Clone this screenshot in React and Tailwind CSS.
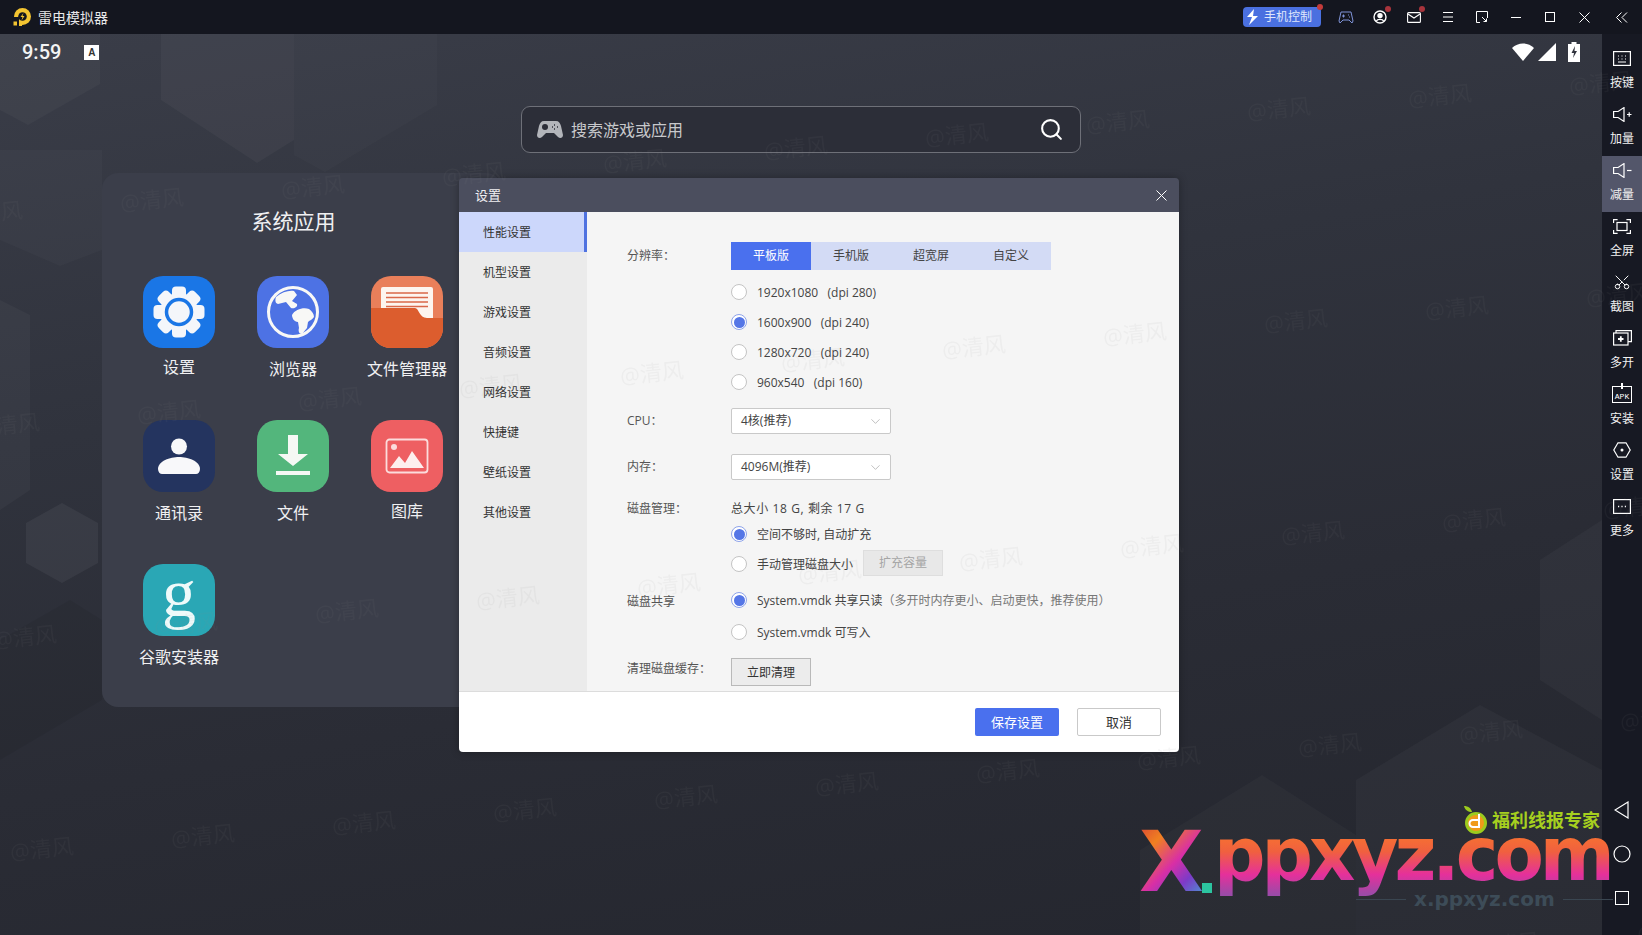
import React from "react";
import { ChevronDown, Scissors, Search } from "lucide-react";

const baseFont = "font-['Open_Sans','Noto_Sans_CJK_SC',sans-serif]";

// faint diagonal grid of the "@清风" mark, it lies over the whole shot
const marks = [];
for (let row = 0; row < 5; row++) {
  for (let col = -1; col < 11; col++) {
    marks.push({
      x: col * 161 + row * 17 + 152,
      y: row * 212 - col * 13 + 200,
    });
  }
}

const Watermark = () => (
  <div className="absolute inset-0 overflow-hidden pointer-events-none">
    {marks.map((m, i) => (
      <span
        key={i}
        className="absolute text-[22px] leading-none text-[#8a8a8a] opacity-[0.07] -rotate-6 whitespace-nowrap"
        style={{ left: m.x - 32, top: m.y - 12 }}
      >
        @清风
      </span>
    ))}
  </div>
);

const Wallpaper = () => (
  <svg className="absolute inset-0 w-full h-full" viewBox="0 34 1602 901">
    <g stroke="none">
      <polygon points="0,34 100,34 100,84 28,125 0,110" fill="#fff" fillOpacity="0.03" />
      <polygon points="161,34 294,34 294,140 257,163 161,100" fill="#fff" fillOpacity="0.035" />
      <polygon points="294,34 437,34 437,105 325,172 294,155" fill="#fff" fillOpacity="0.02" />
      <polygon points="0,150 102,150 102,250 60,266 0,240" fill="#fff" fillOpacity="0.025" />
      <polygon points="0,300 30,315 30,490 0,510" fill="#fff" fillOpacity="0.03" />
      <polygon points="62,503 98,523 98,563 62,583 26,563 26,523" fill="#fff" fillOpacity="0.05" />
      <polygon points="1140,850 1262,775 1356,835 1356,935 1140,935" fill="#fff" fillOpacity="0.025" />
      <polygon points="1356,935 1356,780 1480,705 1602,770 1602,935" fill="#fff" fillOpacity="0.03" />
      <polygon points="1602,520 1540,560 1540,680 1602,720" fill="#fff" fillOpacity="0.03" />
      <polygon points="0,640 70,600 102,620 102,700 0,760" fill="#000" fillOpacity="0.06" />
    </g>
  </svg>
);

const Logo = () => (
  <svg width="18" height="18" viewBox="0 0 18 18">
    <circle cx="9.500" cy="8.500" r="8.500" fill="#f4c531" />
    <circle cx="9.500" cy="8.500" r="4.300" fill="#14161f" />
    <rect x="0" y="9" width="6" height="9" fill="#14161f" />
    <rect x="6" y="13" width="3" height="5" fill="#f4c531" />
    <rect x="0.500" y="13.500" width="3.500" height="4" fill="#f4c531" />
    <path d="M10.500 5 7.500 9h2l-1 3.500L11.500 8h-2z" fill="#f4c531" />
  </svg>
);

const topIcon = "w-[34px] h-[34px] flex items-center justify-center relative";
const Dot = () => (
  <span className="absolute top-[6px] right-[6px] w-[6px] h-[6px] rounded-full bg-[#a8343c]" />
);

const TitleBar = () => (
  <div className="h-[34px] bg-[#14161f] flex items-center shrink-0">
    <div className="ml-[13px]">
      <Logo />
    </div>
    <div className="ml-[7px] text-[14px] text-[#e8e8ea]">雷电模拟器</div>
    <div className="ml-auto flex items-center pr-[1px]">
      <div className="relative w-[78px] h-[20px] mr-[8px] rounded-[4px] bg-[#4a70e0] flex items-center">
        <svg width="14" height="16" viewBox="0 0 14 16" className="ml-[3px]">
          <path d="M8 0 1 8h5l-3 8 9-9H7z" fill="#fff" />
        </svg>
        <span className="ml-[4px] text-[12px] text-[#dfe6fb] whitespace-nowrap">手机控制</span>
        <span className="absolute -top-[3px] -right-[2px] w-[6px] h-[6px] rounded-full bg-[#c43b3b]" />
      </div>
      <div className={topIcon}>
        <svg width="16" height="13" viewBox="0 0 16 13" fill="none" stroke="#7f93d8" strokeWidth="1">
          <path d="M3 1h10l2 9-1 2-3-3H5l-3 3-1-2z" />
          <path d="M4 5h3M5.500 3.500v3M10 4h1M11 6h1" />
        </svg>
      </div>
      <div className={topIcon}>
        <svg width="14" height="14" viewBox="0 0 14 14" fill="none" stroke="#fff" strokeWidth="1.400">
          <circle cx="7" cy="7" r="6" />
          <circle cx="7" cy="5.600" r="2" fill="#fff" />
          <path d="M3.400 11c1-2.200 6.200-2.200 7.200 0" />
        </svg>
        <Dot />
      </div>
      <div className={topIcon}>
        <svg width="14" height="11" viewBox="0 0 14 11" fill="none" stroke="#fff" strokeWidth="1.100">
          <rect x="0.600" y="0.600" width="12.800" height="9.800" rx="1" />
          <path d="m1 2 6 4 6-4" />
        </svg>
        <Dot />
      </div>
      <div className={topIcon}>
        <svg width="12" height="10" viewBox="0 0 12 10" stroke="#fff" strokeWidth="1">
          <path d="M1 .5h10M1 5h10M1 9.500h10" />
        </svg>
      </div>
      <div className={topIcon}>
        <svg width="12" height="12" viewBox="0 0 12 12" fill="none" stroke="#fff" strokeWidth="1">
          <path d="M4 11.500H.5V.5h11V7" />
          <path d="M6 6l4.500 4.500M10.500 7.500v3h-3" />
        </svg>
      </div>
      <div className={topIcon}>
        <div className="w-[10px] h-px bg-white" />
      </div>
      <div className={topIcon}>
        <div className="w-[10px] h-[10px] border border-white" />
      </div>
      <div className={topIcon}>
        <svg width="11" height="11" viewBox="0 0 11 11" stroke="#fff" strokeWidth="1">
          <path d="m.5.5 10 10M10.500.5l-10 10" />
        </svg>
      </div>
      <div className="w-[40px] h-[34px] flex items-center justify-center pl-[2px]">
        <svg width="12" height="11" viewBox="0 0 12 11" fill="none" stroke="#fff" strokeWidth="1">
          <path d="M5.500.5.500 5.500l5 5M11 .5l-5 5 5 5" />
        </svg>
      </div>
    </div>
  </div>
);

const line = { fill: "none", stroke: "#fff", strokeWidth: 1.2 };

const sideItems = [
  {
    label: "按键",
    icon: (
      <svg width="18" height="15" viewBox="0 0 18 15" {...line}>
        <rect x=".6" y=".6" width="16.800" height="13.800" />
        <path d="M5 5h1M8.500 5h1M12 5h1M5 8h1M8.500 8h1M12 8h1M5 11h8" />
      </svg>
    ),
  },
  {
    label: "加量",
    icon: (
      <svg width="19" height="15" viewBox="0 0 19 15" {...line}>
        <path d="M.6 4.500h4.500L11 .6v13.800L5.100 10.500H.6z" />
        <path d="M14 7.500h4.500M16.200 5.300v4.400" />
      </svg>
    ),
  },
  {
    label: "减量",
    active: true,
    icon: (
      <svg width="19" height="15" viewBox="0 0 19 15" {...line}>
        <path d="M.6 4.500h4.500L11 .6v13.800L5.100 10.500H.6z" />
        <path d="M14 7.500h4.500" />
      </svg>
    ),
  },
  {
    label: "全屏",
    icon: (
      <svg width="18" height="15" viewBox="0 0 18 15" {...line}>
        <path d="M.6 4V.6h4M13.400.6h4V4M17.400 11v3.400h-4M4.600 14.400h-4V11" />
        <rect x="4" y="3.500" width="10" height="8" />
      </svg>
    ),
  },
  { label: "截图", icon: <Scissors size={18} color="#fff" strokeWidth={1.3} className="-rotate-90" /> },
  {
    label: "多开",
    icon: (
      <svg width="19" height="16" viewBox="0 0 19 16" {...line}>
        <path d="M3 3V.6h15.400v11H15" />
        <rect x=".6" y="3" width="14.400" height="12" />
        <path d="M5 9h5.500M7.800 6.300v5.400" strokeWidth="1.800" />
      </svg>
    ),
  },
  {
    label: "安装",
    icon: (
      <div className="relative w-[20px] h-[17px] mt-[1px] border border-white flex items-end justify-center">
        <span className="text-[8px] leading-[11px] text-white font-['Liberation_Mono',monospace]">APK</span>
        <span className="absolute -top-[4px] left-[8px] w-[2px] h-[6px] bg-white" />
      </div>
    ),
  },
  {
    label: "设置",
    icon: (
      <svg width="18" height="16" viewBox="0 0 18 16" {...line}>
        <path d="M5 .8h8L17.200 8 13 15.200H5L.8 8z" />
        <circle cx="9" cy="8" r="1.500" fill="#fff" stroke="none" />
      </svg>
    ),
  },
  {
    label: "更多",
    icon: (
      <svg width="18" height="15" viewBox="0 0 18 15" {...line}>
        <rect x=".6" y=".6" width="16.800" height="13.800" />
        <path d="M5 7.500h1.200M8.400 7.500h1.200M11.800 7.500H13" strokeWidth="1.500" />
      </svg>
    ),
  },
];

const Sidebar = () => (
  <div className="w-10 bg-[#171923] flex flex-col shrink-0 pt-[10px]">
    {sideItems.map((s) => (
      <div
        key={s.label}
        className={`h-[56px] flex flex-col items-center pt-[2px] ${s.active ? "bg-[#53566a]" : ""}`}
      >
        <div className="h-[24px] flex items-center justify-center">{s.icon}</div>
        <div className="mt-[3px] text-[12px] leading-[20px] text-[#f2f2f2]">{s.label}</div>
      </div>
    ))}
    <div className="mt-auto pb-[30px] flex flex-col items-center gap-[26px]">
      <svg width="16" height="18" viewBox="0 0 16 18" fill="none" stroke="#fff" strokeWidth="1.200">
        <path d="M14 1v16L1 9z" />
      </svg>
      <svg width="18" height="18" viewBox="0 0 18 18" fill="none" stroke="#fff" strokeWidth="1.200">
        <circle cx="9" cy="9" r="8" />
      </svg>
      <div className="mt-[2px] w-[14px] h-[14px] border border-white" />
    </div>
  </div>
);

const IconBox = ({ bg, children }) => (
  <div className={`w-[72px] h-[72px] rounded-[20px] overflow-hidden relative flex items-center justify-center ${bg}`}>
    {children}
  </div>
);

const apps = [
  {
    name: "设置",
    bg: "bg-[#1a76e6]",
    labelClass: "mt-[7px]",
    icon: (
      <svg width="52" height="52" viewBox="0 0 52 52">
        {[0, 45, 90, 135].map((a) => (
          <rect key={a} x="19" y="0.500" width="14" height="51" rx="4" fill="#f4f6fa" transform={`rotate(${a} 26 26)`} />
        ))}
        <circle cx="26" cy="26" r="19" fill="#f4f6fa" />
        <circle cx="26" cy="26" r="12.500" fill="#f4f6fa" stroke="#1a76e6" strokeWidth="3.500" />
      </svg>
    ),
  },
  {
    name: "浏览器",
    bg: "bg-[#4d72e4]",
    labelClass: "mt-[9px]",
    icon: (
      <svg width="54" height="54" viewBox="0 0 54 54">
        <circle cx="27" cy="27" r="24.500" fill="#4d72e4" stroke="#f8f8f6" strokeWidth="3" />
        <path d="M10 12c6-5 13-7 18-6l3 4-5 6 5 3c1 3-3 5-6 4l-5-6-8 2c-3-1-3-4-2-7z" fill="#f8f8f6" />
        <path d="M26 30c3-6 12-8 17-6 3 2 5 5 5 8-2 3-4 3-6 5l-1 6-5 6c-3 0-4-3-3-6l-1-6c-4 0-6-4-6-7z" fill="#f8f8f6" />
      </svg>
    ),
  },
  {
    name: "文件管理器",
    bg: "bg-[#e97f5a]",
    labelClass: "mt-[9px]",
    icon: (
      <svg width="72" height="72" viewBox="0 0 72 72" className="absolute inset-0">
        <rect x="10" y="11" width="52" height="40" rx="2" fill="#fdf5ef" />
        <path d="M15 17h42M15 21.500h42M15 26h42M15 30.500h42" stroke="#d9684a" strokeWidth="1.500" />
        <path d="M0 32h44c4 0 4 10 12 10h16v30H0z" fill="#dc5d2e" />
      </svg>
    ),
  },
  {
    name: "通讯录",
    bg: "bg-[#24345f]",
    labelClass: "mt-[9px]",
    icon: (
      <svg width="44" height="44" viewBox="0 0 44 44" className="mt-[5px]">
        <circle cx="22" cy="9.500" r="8" fill="#f8f8fa" />
        <path d="M1 32c0-8 12-12 21-12s21 4 21 12c0 3-2 5-4 5H5c-2 0-4-2-4-5z" fill="#f8f8fa" />
      </svg>
    ),
  },
  {
    name: "文件",
    bg: "bg-[#53b67c]",
    labelClass: "mt-[9px]",
    icon: (
      <svg width="36" height="44" viewBox="0 0 36 44">
        <path d="M13 1h10v19h10L18 32 3 20h10z" fill="#f5f8f4" />
        <rect x="1" y="37" width="34" height="4" fill="#f5f8f4" />
      </svg>
    ),
  },
  {
    name: "图库",
    bg: "bg-[#ee5f62]",
    labelClass: "mt-[7px]",
    icon: (
      <svg width="44" height="36" viewBox="0 0 44 36" fill="none">
        <rect x="1.500" y="1.500" width="41" height="33" rx="3" stroke="#fbdcdc" strokeWidth="1.800" />
        <circle cx="9" cy="9" r="3" fill="#fbdcdc" />
        <path d="M5 30l9-12 6 7 7-12 12 17z" fill="#fdeeee" />
      </svg>
    ),
  },
  {
    name: "谷歌安装器",
    bg: "bg-[#2aa7b5]",
    labelClass: "mt-[9px]",
    icon: (
      <span className="text-[68px] leading-none -mt-[14px] text-[#eefafa] font-['Liberation_Serif',serif]">g</span>
    ),
  },
];

const AppsPanel = () => (
  <div className="w-[400px] h-[534px] ml-[102px] mt-[20px] rounded-[16px] bg-[#3b3e4a] pt-[36px]">
    <div className="text-center w-[383px] text-[21px] leading-[24px] text-[#f0f0f2]">系统应用</div>
    <div className="grid grid-cols-[114px_114px_114px] auto-rows-[144px] pl-[41px] mt-[43px]">
      {apps.map((a) => (
        <div key={a.name} className="flex flex-col items-center w-[72px]">
          <IconBox bg={a.bg}>{a.icon}</IconBox>
          <div className={`text-[16px] leading-[24px] text-[#f0f0f2] whitespace-nowrap ${a.labelClass}`}>{a.name}</div>
        </div>
      ))}
    </div>
  </div>
);

const Radio = ({ checked, label, hint }) => (
  <div className="flex items-center">
    <span
      className={`w-[16px] h-[16px] rounded-full border flex items-center justify-center bg-white ${
        checked ? "border-[#8ea3ea]" : "border-[#c4c4c4]"
      }`}
    >
      {checked && <span className="w-[11px] h-[11px] rounded-full bg-[#5576e6]" />}
    </span>
    <span className="ml-[10px] pt-[2px] text-[12px] text-[#444] whitespace-pre">
      {label}
      {hint && <span className="text-[#777]">{hint}</span>}
    </span>
  </div>
);

const Select = ({ value }) => (
  <div className="w-[160px] h-[26px] rounded-[2px] border border-[#c9c9c9] bg-white flex items-center justify-between pl-[9px] pr-[7px]">
    <span className="text-[12px] text-[#444]">{value}</span>
    <ChevronDown size={15} color="#9a9a9a" strokeWidth={1} />
  </div>
);

const menu = ["性能设置", "机型设置", "游戏设置", "音频设置", "网络设置", "快捷键", "壁纸设置", "其他设置"];
const tabs = ["平板版", "手机版", "超宽屏", "自定义"];

const Label = ({ children, className = "" }) => (
  <div className={`w-[104px] shrink-0 text-[12px] text-[#555] ${className}`}>{children}</div>
);

const SettingsDialog = () => (
  <div className="absolute left-[459px] top-[144px] w-[720px] h-[574px] rounded-[4px] overflow-hidden flex flex-col shadow-[0_0_8px_rgba(0,0,0,0.3)]">
    <div className="h-[34px] bg-[#4b4e5e] flex items-center justify-between pl-[16px] pr-[12px] shrink-0">
      <span className="pt-[2px] text-[13px] text-[#f0f0f2]">设置</span>
      <svg width="11" height="11" viewBox="0 0 11 11" stroke="#fff" strokeWidth="1">
        <path d="m.5.5 10 10M10.500.5l-10 10" />
      </svg>
    </div>
    <div className="h-[480px] flex border-b border-[#dcdcdc] shrink-0">
      <div className="w-[128px] bg-[#ebebeb] shrink-0">
        {menu.map((m, i) => (
          <div
            key={m}
            className={`h-[40px] flex items-center pl-[24px] pt-[2px] text-[12px] text-[#333] ${
              i === 0 ? "bg-[#ccd7fb] border-r-[3px] border-[#4f72e0]" : ""
            }`}
          >
            {m}
          </div>
        ))}
      </div>
      <div className="flex-1 bg-[#f5f5f5] pl-[40px] pt-[30px]">
        <div className="flex items-center h-[28px]">
          <Label>分辨率：</Label>
          <div className="flex bg-[#d3dbf5]">
            {tabs.map((t, i) => (
              <div
                key={t}
                className={`w-[80px] h-[28px] flex items-center justify-center text-[12px] ${
                  i === 0 ? "bg-[#4a70ee] text-white" : "text-[#444]"
                }`}
              >
                {t}
              </div>
            ))}
          </div>
        </div>
        <div className="mt-[7px] ml-[104px] flex flex-col">
          {["1920x1080   (dpi 280)", "1600x900   (dpi 240)", "1280x720   (dpi 240)", "960x540   (dpi 160)"].map((r, i) => (
            <div key={r} className="h-[30px] flex items-center">
              <Radio label={r} checked={i === 1} />
            </div>
          ))}
        </div>
        <div className="mt-[11px] flex items-center">
          <Label>CPU：</Label>
          <Select value="4核(推荐)" />
        </div>
        <div className="mt-[20px] flex items-center">
          <Label>内存：</Label>
          <Select value="4096M(推荐)" />
        </div>
        <div className="mt-[19px] h-[20px] flex items-center">
          <Label>磁盘管理：</Label>
          <span className="text-[12px] tracking-[0.6px] text-[#444]">总大小 18 G, 剩余 17 G</span>
        </div>
        <div className="ml-[104px]">
          <div className="h-[30px] flex items-center">
            <Radio checked label="空间不够时, 自动扩充" />
          </div>
          <div className="h-[30px] flex items-center">
            <Radio label="手动管理磁盘大小" />
            <div className="ml-[10px] w-[80px] h-[26px] -mt-[2px] bg-[#e8e8e8] border border-[#dedede] flex items-center justify-center text-[12px] text-[#a5a5a5]">
              扩充容量
            </div>
          </div>
        </div>
        <div className="mt-[5px] flex">
          <Label className="pt-[2px] leading-[32px]">磁盘共享</Label>
          <div>
            <div className="h-[32px] flex items-center">
              <Radio checked label="System.vmdk 共享只读" hint="（多开时内存更小、启动更快，推荐使用）" />
            </div>
            <div className="h-[32px] flex items-center">
              <Radio label="System.vmdk 可写入" />
            </div>
          </div>
        </div>
        <div className="mt-[10px] flex">
          <Label className="pt-[1px] leading-[20px]">清理磁盘缓存：</Label>
          <div className="w-[80px] h-[28px] pt-[2px] bg-[#ececec] border border-[#b9b9b9] flex items-center justify-center text-[12px] text-[#333]">
            立即清理
          </div>
        </div>
      </div>
    </div>
    <div className="flex-1 bg-white flex items-center justify-end gap-[18px] pr-[18px]">
      <div className="w-[84px] h-[28px] pt-[2px] rounded-[2px] bg-[#4a70ee] flex items-center justify-center text-[13px] text-white">
        保存设置
      </div>
      <div className="w-[84px] h-[28px] pt-[2px] rounded-[2px] border border-[#c9c9c9] bg-white flex items-center justify-center text-[13px] text-[#333]">
        取消
      </div>
    </div>
  </div>
);

const SiteBadge = () => (
  <div className="absolute left-[1130px] top-[775px] w-[480px] h-[134px] pointer-events-none">
    <span className="absolute left-[9px] top-[37px] text-[84px] leading-[100px] font-bold font-['DejaVu_Sans',sans-serif] bg-[linear-gradient(135deg,#d2303f_0%,#f08020_28%,#d92fa5_52%,#7d3ac8_70%,#2fc8d8_100%)] bg-clip-text text-transparent">
      X
    </span>
    <span className="absolute left-[72px] top-[108px] w-[10px] h-[10px] bg-[#2cc4a0]" />
    <span className="absolute left-[84px] top-[24px] text-[72px] leading-[110px] tracking-[-4px] scale-y-[1.04] font-bold font-['DejaVu_Sans',sans-serif] whitespace-nowrap bg-[linear-gradient(180deg,#f8762e_30%,#f0603f_48%,#e5309b_68%,#9c4aa8_85%)] bg-clip-text text-transparent">
      ppxyz.com
    </span>
    <div className="absolute left-[333px] top-[30px] flex items-center">
      <svg width="26" height="30" viewBox="0 0 26 30" fill="none">
        <path d="M1 1c4 0 7 2 8 6C5 7 2 5 1 1z" fill="#9ccb1e" />
        <circle cx="13" cy="18" r="9.500" stroke="#9ccb1e" strokeWidth="3" fill="#f09a1a" />
        <path d="M16 9v13h-6a3.500 3.500 0 0 1 0-7h6" stroke="#fff" strokeWidth="2" />
      </svg>
      <span className="ml-[3px] text-[18px] leading-[20px] font-bold text-[#a6cf1f] whitespace-nowrap">福利线报专家</span>
    </div>
    <div className="absolute left-[226px] top-[114px] flex items-center">
      <div className="w-[50px] h-px bg-[#3a4651]" />
      <span className="mx-[8px] text-[20px] leading-[20px] font-bold font-['DejaVu_Sans',sans-serif] text-[#3d4c58]">x.ppxyz.com</span>
      <div className="w-[50px] h-px bg-[#3a4651]" />
    </div>
  </div>
);

export default function App() {
  return (
    <div className={`relative w-[1642px] h-[935px] overflow-hidden flex flex-col bg-[#14161f] ${baseFont}`}>
      <TitleBar />
      <div className="flex flex-1 min-h-0">
        <div className="relative flex-1 bg-[linear-gradient(170deg,#3a3d48_0%,#30333d_35%,#2a2c35_65%,#24262e_100%)]">
          <Wallpaper />
          <div className="relative h-[34px] flex items-center justify-between pl-[22px] pr-[22px] pt-[2px]">
            <div className="flex items-center">
              <span className="text-[20px] font-medium text-[#f4f4f4] font-['Roboto',sans-serif]">9:59</span>
              <span className="ml-[23px] w-[15px] h-[15px] bg-white flex items-center justify-center text-[10px] font-bold text-[#333] font-['Liberation_Sans',sans-serif]">
                A
              </span>
            </div>
            <div className="flex items-center">
              <svg width="22" height="18" viewBox="0 0 22 18">
                <path d="M0 5c6-6 16-6 22 0L11 18z" fill="#fff" />
              </svg>
              <svg width="18" height="18" viewBox="0 0 18 18" className="ml-[4px]">
                <path d="M18 0v18H0z" fill="#fff" />
              </svg>
              <svg width="12" height="20" viewBox="0 0 12 20" className="ml-[12px]">
                <path d="M3.500 0h5v2H12v18H0V2h3.500z" fill="#fff" />
                <path d="M7 4 3.500 11H6l-1 5 4-7H6.500z" fill="#30333d" />
              </svg>
            </div>
          </div>
          <div className="relative ml-[521px] mt-[38px] w-[560px] h-[47px] rounded-[9px] border border-[#6e7078] bg-[#2c2e38] flex items-center pl-[15px] pr-[16px]">
            <svg width="26" height="20" viewBox="0 0 26 20">
              <path d="M7 1h12c3 0 4 2 5 5l2 9c0 3-3 4-5 2l-4-4H9l-4 4c-2 2-5 1-5-2l2-9c1-3 2-5 5-5z" fill="#b3b5ba" />
              <circle cx="8" cy="7" r="3" fill="#2c2e38" />
              <path d="M17 5h1M20 7h1M15 7h1M17 9h1" stroke="#2c2e38" strokeWidth="1.500" />
            </svg>
            <span className="ml-[8px] text-[16px] text-[#c8c9cc]">搜索游戏或应用</span>
            <Search size={25} color="#fff" strokeWidth={2} className="ml-auto" />
          </div>
          <div className="relative">
            <AppsPanel />
          </div>
        </div>
        <Sidebar />
      </div>
      <div className="absolute inset-x-0 top-[34px] bottom-0">
        <SettingsDialog />
      </div>
      <SiteBadge />
      <Watermark />
    </div>
  );
}
